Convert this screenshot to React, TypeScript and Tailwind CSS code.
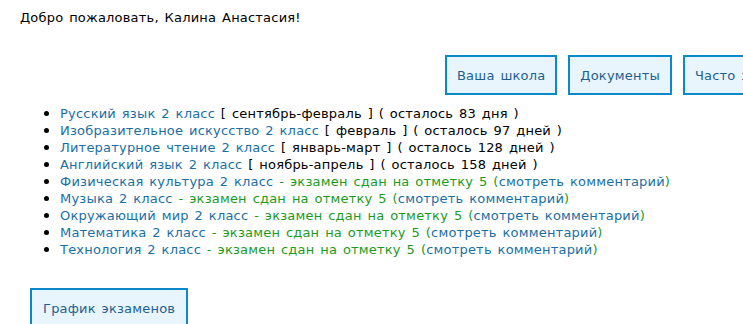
import React from 'react';

type Course = { name: string; period?: string; left?: string };

const COURSES: Course[] = [
  { name: 'Русский язык 2 класс', period: 'сентябрь-февраль', left: 'осталось 83 дня' },
  { name: 'Изобразительное искусство 2 класс', period: 'февраль', left: 'осталось 97 дней' },
  { name: 'Литературное чтение 2 класс', period: 'январь-март', left: 'осталось 128 дней' },
  { name: 'Английский язык 2 класс', period: 'ноябрь-апрель', left: 'осталось 158 дней' },
  { name: 'Физическая культура 2 класс' },
  { name: 'Музыка 2 класс' },
  { name: 'Окружающий мир 2 класс' },
  { name: 'Математика 2 класс' },
  { name: 'Технология 2 класс' },
];

const NavButton: React.FC<{ label: string }> = ({ label }) => (
  <a className="shrink-0 h-10 px-[10px] flex items-center border-2 border-[#0a8ac8] bg-[#e8f5fc] text-[#1f5f8f] whitespace-nowrap">
    {label}
  </a>
);

const App: React.FC = () => (
  <div className="w-[743px] h-[324px] overflow-hidden bg-white text-black text-[13px] leading-[17px] tracking-[0.2px] [word-spacing:1.5px] font-['DejaVu_Sans',Verdana,sans-serif]">
    <p className="pl-5 pt-[9px]">Добро пожаловать, Калина Анастасия!</p>

    {/* Top menu */}
    <div className="flex gap-[11px] pl-[445px] mt-[29px]">
      <NavButton label="Ваша школа" />
      <NavButton label="Документы" />
      <NavButton label="Часто задаваемые вопросы" />
    </div>

    {/* Courses */}
    <ul className="list-disc pl-[60px] mt-[10px] marker:text-[15px]">
      {COURSES.map((c) => (
        <li key={c.name}>
          <a className="text-[#1a6fa3]">{c.name}</a>
          {c.period ? (
            <span> [ {c.period} ] ( {c.left} )</span>
          ) : (
            <span className="text-[#1c9a1c]">
              {' '}- экзамен сдан на отметку 5 (<a className="text-[#1a6fa3]">смотреть комментарий</a>)
            </span>
          )}
        </li>
      ))}
    </ul>

    <div className="pl-[30px] mt-[30px]">
      <a className="inline-flex h-10 px-[11px] items-center border-2 border-[#0a8ac8] bg-[#e8f5fc] text-[#1f5f8f]">
        График экзаменов
      </a>
    </div>
  </div>
);

export default App;
